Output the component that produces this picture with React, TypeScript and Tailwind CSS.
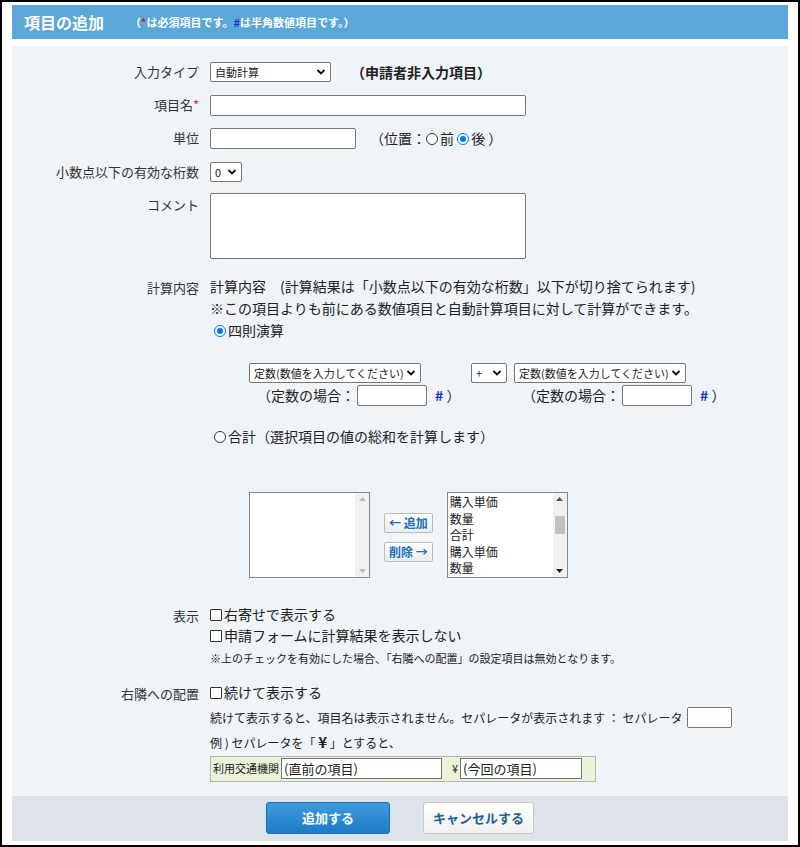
import React from 'react';

const Label: React.FC<{ children: React.ReactNode; className?: string }> = ({ children, className }) => (
  <div className={`w-[198px] shrink-0 text-right pr-[11px] text-[13px] text-[#333] ${className || ''}`}>{children}</div>
);

const Sel: React.FC<{ text: string; className?: string }> = ({ text, className }) => (
  <div className={`flex items-center justify-between h-[20px] border border-[#767676] rounded-[2px] bg-white px-[4px] text-[11px] whitespace-nowrap text-[#222] ${className || ''}`}>
    <span>{text}</span>
    <svg width="10" height="8" viewBox="0 0 10 8" className="shrink-0"><path d="M1.5 2 L5 5.5 L8.5 2" stroke="#111" strokeWidth="1.8" fill="none" /></svg>
  </div>
);

const Radio: React.FC<{ on?: boolean }> = ({ on }) => (
  <span className={`inline-block w-[12px] h-[12px] rounded-full border ${on ? 'border-[#0075ff] border-[1.5px]' : 'border-[#333]'} bg-white relative mr-[2px] align-[-1px]`}>
    {on && <span className="absolute inset-[2px] rounded-full bg-[#0075ff]" />}
  </span>
);

const Check = () => <span className="inline-block w-[12px] h-[12px] border border-[#333] rounded-[1px] bg-white mr-[2px] align-[-1px]" />;

const ListBox: React.FC<{ items: string[] }> = ({ items }) => (
  <div className="flex w-[121px] h-[86px] border border-[#888] bg-white">
    <div className="flex-1 text-[12px] leading-[16.5px] text-[#222] pl-[2px] pt-[1px] overflow-hidden">
      {items.map((t, i) => <div key={i}>{t}</div>)}
    </div>
    <div className="w-[14px] bg-[#f1f1f1] flex flex-col items-center justify-between py-[4px]">
      <svg width="7" height="4"><path d="M0 4 L3.5 0 L7 4Z" fill={items.length ? '#555' : '#bbb'} /></svg>
      {items.length > 0 && <div className="w-[10px] h-[18px] bg-[#c1c1c1] -mt-[20px]" />}
      <svg width="7" height="4"><path d="M0 0 L3.5 4 L7 0Z" fill={items.length ? '#222' : '#bbb'} /></svg>
    </div>
  </div>
);

const SmallBtn: React.FC<{ children: React.ReactNode }> = ({ children }) => (
  <div className="h-[20px] px-[4px] border border-[#bbb] rounded-[2px] bg-gradient-to-b from-white to-[#e8ecef] text-[12px] font-bold text-[#1c6fb8] flex items-center">{children}</div>
);

const ConstRow: React.FC<{ className?: string }> = ({ className }) => (
  <div className={`flex items-center pl-[8px] ${className || ''}`}>（定数の場合：<div className="w-[70px] h-[21px] border border-[#767676] rounded-[2px] bg-white ml-[2px]" /><span className="ml-[8px] text-[#1a2ed8] font-bold">#</span>&nbsp;）</div>
);

const App: React.FC = () => {
  return (
    <div className="w-[800px] h-[847px] bg-white border-2 border-black" style={{ fontFamily: '"Noto Sans CJK JP", "Noto Sans", sans-serif' }}>
      <div className="mx-[10px] mt-[3px] h-[34px] bg-[#5aa7d8] flex items-center pl-[12px]">
        <span className="text-white font-bold text-[16px]">項目の追加</span>
        <span className="ml-[26px] text-white font-bold text-[11px]">（<span className="text-[#e0142a]">*</span>は必須項目です。<span className="text-[#1a2ed8]">#</span>は半角数値項目です。）</span>
      </div>
      <div className="mx-[10px] mt-[7px] bg-[#eff4f8] pt-[15px] text-[14px] text-[#222]">
        <div className="flex items-center h-[22px]">
          <Label>入力タイプ</Label>
          <Sel text="自動計算" className="w-[121px]" />
          <span className="ml-[20px] font-bold text-[14px]">（申請者非入力項目）</span>
        </div>
        <div className="flex items-center h-[22px] mt-[11px]">
          <Label>項目名<span className="text-[#e0142a]">*</span></Label>
          <div className="w-[316px] h-[21px] border border-[#767676] rounded-[2px] bg-white" />
        </div>
        <div className="flex items-center h-[22px] mt-[11px]">
          <Label>単位</Label>
          <div className="w-[146px] h-[21px] border border-[#767676] rounded-[2px] bg-white" />
          <span className="ml-[14px]">（位置：<Radio />前 <Radio on />後 ）</span>
        </div>
        <div className="flex items-center h-[22px] mt-[12px]">
          <Label>小数点以下の有効な桁数</Label>
          <Sel text="0" className="w-[32px]" />
        </div>
        <div className="flex mt-[10px]">
          <Label className="pt-[2px]">コメント</Label>
          <div className="w-[316px] h-[66px] border border-[#767676] rounded-[2px] bg-white" />
        </div>
        <div className="flex mt-[16px]">
          <Label className="pt-[3px]">計算内容</Label>
          <div className="leading-[22px]">
            <div>計算内容　(計算結果は「小数点以下の有効な桁数」以下が切り捨てられます)</div>
            <div>※この項目よりも前にある数値項目と自動計算項目に対して計算ができます。</div>
            <div className="pl-[4px]"><Radio on />四則演算</div>
            <div className="pl-[39px] mt-[22px]">
              <div className="flex">
                <Sel text="定数(数値を入力してください)" className="w-[172px]" />
                <Sel text="+" className="w-[36px] ml-[50px]" />
                <Sel text="定数(数値を入力してください)" className="w-[172px] ml-[7px]" />
              </div>
              <div className="flex mt-[1px]">
                <ConstRow className="w-[265px]" />
                <ConstRow />
              </div>
            </div>
            <div className="pl-[4px] mt-[19px]"><Radio />合計（選択項目の値の総和を計算します）</div>
            <div className="flex items-center pl-[39px] mt-[45px]">
              <ListBox items={[]} />
              <div className="flex flex-col gap-[9px] mx-[14px] mt-[4px]">
                <SmallBtn>← 追加</SmallBtn>
                <SmallBtn>削除 →</SmallBtn>
              </div>
              <ListBox items={['購入単価', '数量', '合計', '購入単価', '数量']} />
            </div>
          </div>
        </div>
        <div className="flex mt-[26px]">
          <Label className="pt-[2px]">表示</Label>
          <div className="leading-[21px]">
            <div><Check />右寄せで表示する</div>
            <div><Check />申請フォームに計算結果を表示しない</div>
            <div className="text-[11px] mt-[2px]">※上のチェックを有効にした場合、「右隣への配置」の設定項目は無効となります。</div>
          </div>
        </div>
        <div className="flex mt-[13px] pb-[14px]">
          <Label className="pt-[2px]">右隣への配置</Label>
          <div>
            <div className="leading-[21px]"><Check />続けて表示する</div>
            <div className="flex items-center text-[12px] mt-[4px]">続けて表示すると、項目名は表示されません。セパレータが表示されます ： セパレータ<div className="w-[45px] h-[21px] border border-[#767676] rounded-[2px] bg-white ml-[4px]" /></div>
            <div className="text-[12px] mt-[3px]">例 ) セパレータを「 <b className="text-[15px]">¥</b> 」とすると、</div>
            <div className="flex items-center w-[386px] h-[26px] bg-[#eaf2d8] border border-[#b5b5b5] mt-[2px] px-[2px] text-[11px]">
              <span>利用交通機関</span>
              <div className="w-[161px] h-[21px] border border-[#767676] bg-white ml-[2px] text-[13px] pl-[2px] leading-[19px]">(直前の項目)</div>
              <span className="ml-[10px]">¥</span>
              <div className="w-[122px] h-[21px] border border-[#767676] bg-white ml-[2px] text-[13px] pl-[2px] leading-[19px]">(今回の項目)</div>
            </div>
          </div>
        </div>
        <div className="h-[45px] bg-[#dde3e8] flex items-center justify-center gap-[33px]">
          <div className="w-[124px] h-[32px] rounded-[3px] bg-gradient-to-b from-[#3b9be0] to-[#1f7bc6] border border-[#1a6fb0] text-white font-bold text-[13px] flex items-center justify-center">追加する</div>
          <div className="w-[111px] h-[32px] rounded-[3px] bg-gradient-to-b from-white to-[#f0f0f0] border border-[#c8c8c8] text-[#1c5e96] font-bold text-[13px] flex items-center justify-center">キャンセルする</div>
        </div>
      </div>
    </div>
  );
};

export default App;
